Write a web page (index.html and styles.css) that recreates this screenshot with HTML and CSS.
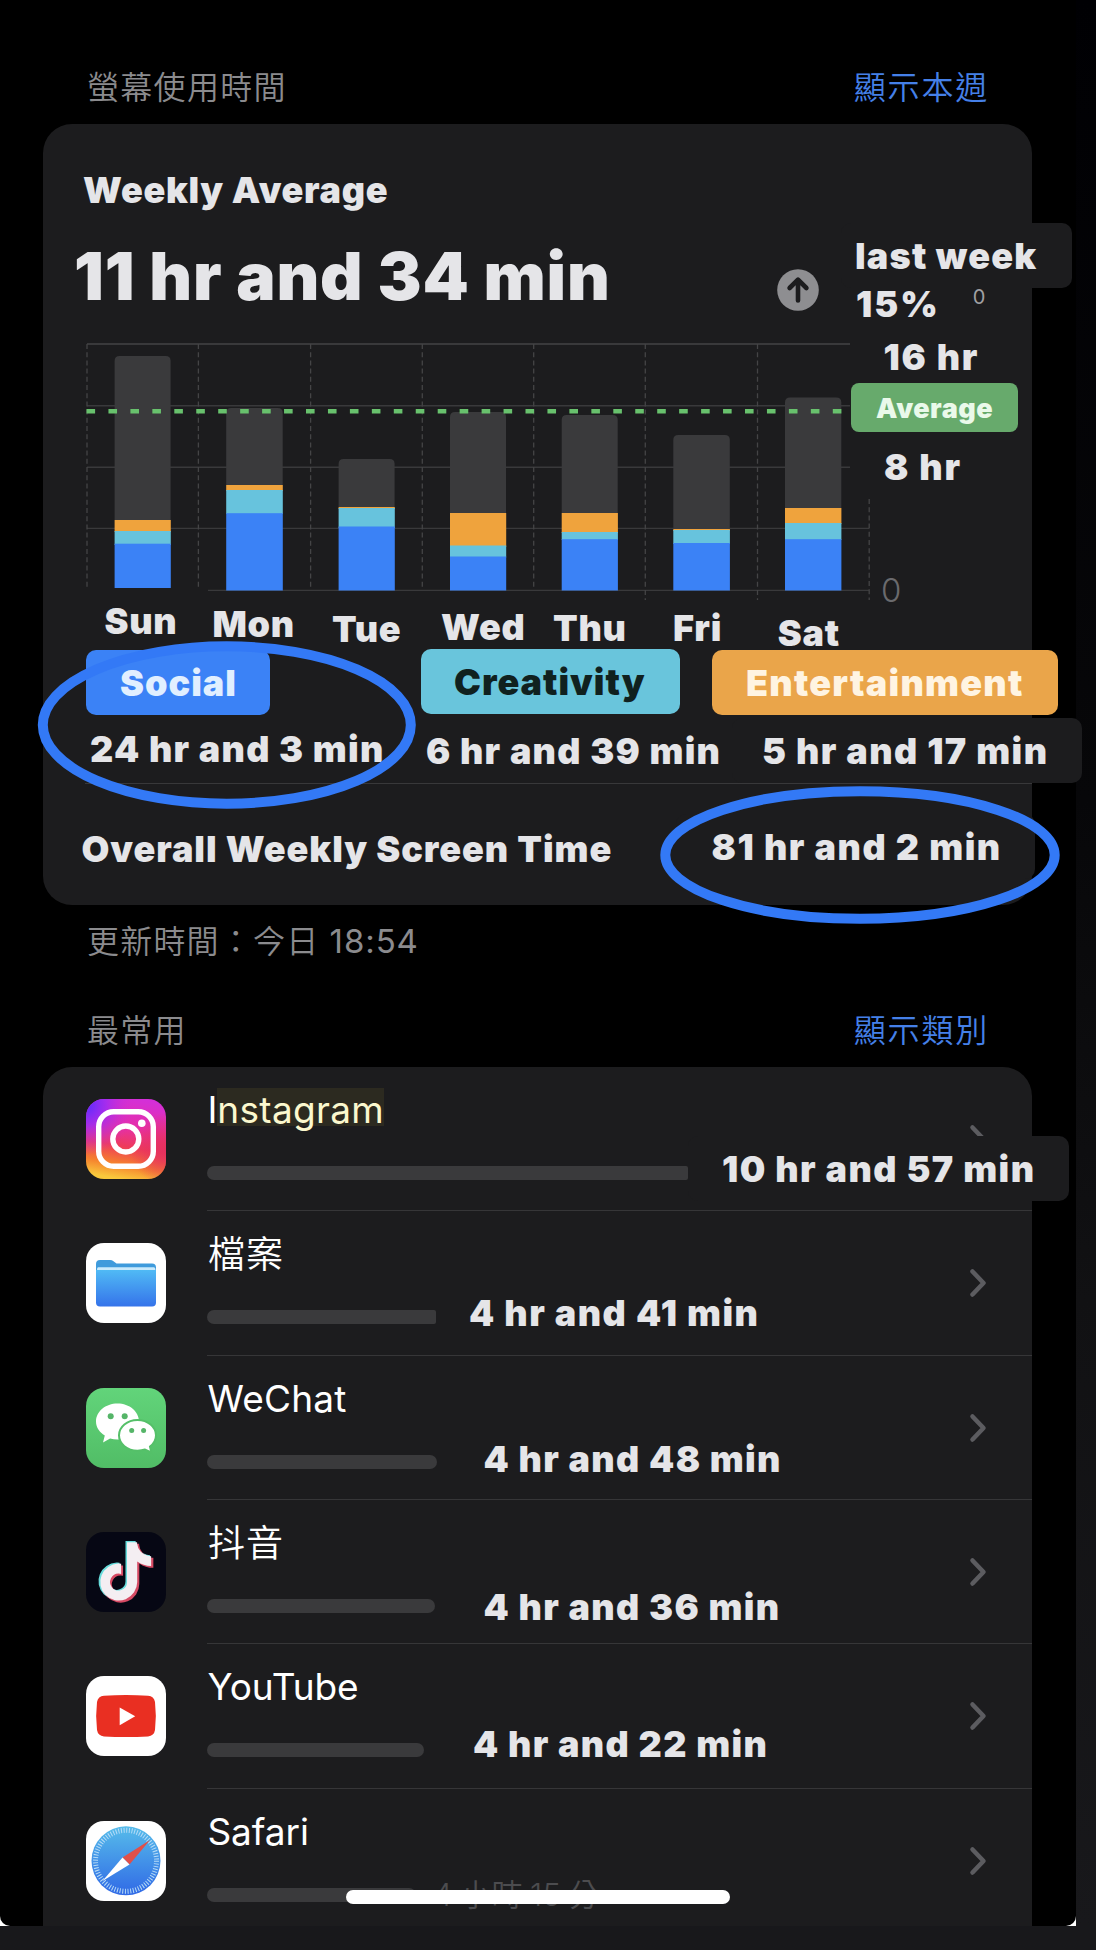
FILE: index.html
```html
<!DOCTYPE html>
<html lang="zh-Hant">
<head>
<meta charset="utf-8">
<title>螢幕使用時間</title>
<link rel="stylesheet" href="styles.css">
</head>
<body>
<div class="phone">
<main class="screen">
  <header class="section-head section-head-first">
    <span>螢幕使用時間</span>
    <a class="link">顯示本週</a>
  </header>

  <section class="card summary">
    <h2 class="label title">Weekly Average</h2>
    <div class="hero">
      <div class="hero-value">11 hr and 34 min</div>
      <svg class="trend" viewBox="0 0 42 42"><circle cx="21" cy="21" r="20.8" fill="#8e8e91"/><path d="M21 31.5V11M12.6 19 21 10.6 29.4 19" fill="none" stroke="#1c1c1e" stroke-width="4.6" stroke-linecap="round" stroke-linejoin="round"/></svg>
      <div class="compare label">
        <div class="compare-top">last week</div>
        <div class="compare-row"><span>15%</span><span class="tiny-zero">0</span></div>
      </div>
    </div>

    <svg class="chart" viewBox="43 340 989 310">
      <g stroke="#39393b" stroke-width="1.4">
        <path d="M87 344H850" stroke-width="2"/>
        <path d="M87 405.7H850M87 467.3H850M87 528.4H869M208 590.4H869"/>
      </g>
      <g stroke="#444446" stroke-width="1.3" stroke-dasharray="5 3.2" fill="none">
        <path d="M87 344V588M198.4 344V588M310.6 344V590M422.3 344V590M533.7 344V590M645.3 344V600M757.5 344V600M869.2 499V600"/>
      </g>
      <g fill="#3a3a3c">
        <path d="M114.6 520V361q0-5 5-5h46q5 0 5 5V520z"/>
        <path d="M226.2 485V413q0-5 5-5h46.500q5 0 5 5V485z"/>
        <path d="M338.600 507V464q0-5 5-5h46q5 0 5 5V507z"/>
        <path d="M450 513V417q0-5 5-5h46q5 0 5 5V513z"/>
        <path d="M561.700 513V420q0-5 5-5h46q5 0 5 5V513z"/>
        <path d="M673.300 529V440q0-5 5-5h46.500q5 0 5 5V529z"/>
        <path d="M785 508V402.500q0-5 5-5h46.300q5 0 5 5V508z"/>
      </g>
      <g fill="#efa33d">
        <rect x="114.6" y="520" width="56.2" height="12"/><rect x="226.2" y="485" width="56.600" height="6"/>
        <rect x="338.600" y="507" width="56.200" height="2"/><rect x="450" y="513" width="56.200" height="34"/>
        <rect x="561.700" y="513" width="56.200" height="20"/><rect x="673.300" y="529" width="56.600" height="2"/>
        <rect x="785" y="508" width="56.400" height="16"/>
      </g>
      <g fill="#67c3dd">
        <rect x="114.6" y="531" width="56.2" height="14"/><rect x="226.2" y="490" width="56.600" height="24"/>
        <rect x="338.600" y="508" width="56.200" height="20"/><rect x="450" y="545.500" width="56.200" height="12"/>
        <rect x="561.700" y="532" width="56.200" height="8"/><rect x="673.300" y="530" width="56.600" height="14"/>
        <rect x="785" y="523" width="56.400" height="17"/>
      </g>
      <g fill="#3b82f6">
        <rect x="114.6" y="543.700" width="56.2" height="44.300"/><rect x="226.2" y="513.200" width="56.600" height="77.300"/>
        <rect x="338.600" y="526.500" width="56.200" height="64"/><rect x="450" y="556.500" width="56.200" height="34"/>
        <rect x="561.700" y="539.200" width="56.200" height="51.300"/><rect x="673.300" y="543" width="56.600" height="47.500"/>
        <rect x="785" y="539.200" width="56.400" height="51.300"/>
      </g>
      <path d="M86.500 411.300H842" stroke="#68c16d" stroke-width="4.600" stroke-dasharray="8.600 13.350"/>
      <g class="axis label">
        <text x="104.500" y="634">Sun</text><text x="212.500" y="637">Mon</text><text x="332" y="642">Tue</text>
        <text x="441" y="640">Wed</text><text x="553" y="641">Thu</text><text x="673" y="641">Fri</text><text x="777.800" y="646">Sat</text>
        <text class="hours" x="883.500" y="370">16 hr</text><text class="hours" x="884" y="480">8 hr</text>
      </g>
      <text class="axis-zero" x="881" y="602">0</text>
      <rect x="851" y="383" width="167" height="49" rx="8" fill="#67aa6c"/>
      <text class="avg label" x="876" y="417.500">Average</text>
    </svg>

    <div class="legend">
      <div class="legend-item">
        <div class="chip chip-social label">Social</div>
        <div class="legend-time label">24 hr and 3 min</div>
      </div>
      <div class="legend-item legend-item-creativity">
        <div class="chip chip-creativity label">Creativity</div>
        <div class="legend-time label">6 hr and 39 min</div>
      </div>
      <div class="legend-item legend-item-entertainment">
        <div class="chip chip-entertainment label">Entertainment</div>
        <div class="legend-time label">5 hr and 17 min</div>
      </div>
    </div>
    <div class="total">
      <div class="label total-name">Overall Weekly Screen Time</div>
      <div class="label total-time">81 hr and 2 min</div>
    </div>
  </section>

  <p class="updated">更新時間：今日 <span class="clock">18:54</span></p>

  <header class="section-head">
    <span>最常用</span>
    <a class="link">顯示類別</a>
  </header>

  <section class="card apps">
    <article class="app app-instagram">
      <svg class="icon" viewBox="0 0 80 80">
        <defs>
          <linearGradient id="ig" x1=".62" y1="0" x2=".45" y2="1"><stop offset="0" stop-color="#d42fd8"/><stop offset=".35" stop-color="#e62fa8"/><stop offset=".6" stop-color="#ee3b5a"/><stop offset=".82" stop-color="#f5812e"/><stop offset="1" stop-color="#f9c83c"/></linearGradient>
          <radialGradient id="igv" cx="0" cy=".08" r=".62"><stop offset="0" stop-color="#5b2bff"/><stop offset=".4" stop-color="#9a2cf5" stop-opacity=".85"/><stop offset="1" stop-color="#d82fd0" stop-opacity="0"/></radialGradient>
          <radialGradient id="igr" cx="1" cy=".62" r=".45"><stop offset="0" stop-color="#e5305e"/><stop offset="1" stop-color="#e5305e" stop-opacity="0"/></radialGradient>
        </defs>
        <rect width="80" height="80" rx="18" fill="url(#ig)"/><rect width="80" height="80" rx="18" fill="url(#igr)"/><rect width="80" height="80" rx="18" fill="url(#igv)"/>
        <g fill="none" stroke="#fff" stroke-width="5.400"><rect x="12.700" y="12.700" width="54.600" height="54.600" rx="15"/><circle cx="39.800" cy="40" r="13"/></g>
        <circle cx="55.800" cy="24.200" r="3.800" fill="#fff"/>
      </svg>
      <div class="app-body">
        <div class="app-name"><span>I</span><span class="marked">nstagram</span></div>
        <div class="usage"><div class="bar bar-cut" style="width:481px"></div><div class="label app-time">10 hr and 57 min</div></div>
      </div>
      <svg class="chevron" viewBox="0 0 18 30"><path d="M3.500 3.500 14.500 15 3.500 26.500"/></svg>
    </article>

    <article class="app app-files">
      <svg class="icon" viewBox="0 0 80 80">
        <defs><linearGradient id="fl" x1="0" y1="0" x2="0" y2="1"><stop offset="0" stop-color="#50baf5"/><stop offset="1" stop-color="#3573ea"/></linearGradient></defs>
        <rect width="80" height="80" rx="18" fill="#fff"/>
        <path d="M10 21q0-4 4-4h10q2 0 3.500 1.200l3 2.300H66q4 0 4 4V32H10z" fill="#3f9bdc"/>
        <path d="M12 24.200H68q1.500 0 1.500 2.800H11q0-2.800 1-2.800z" fill="#c9eafc"/>
        <path d="M10 27H70V59.500q0 4-4 4H14q-4 0-4-4z" fill="url(#fl)"/>
      </svg>
      <div class="app-body">
        <div class="app-name cjk">檔案</div>
        <div class="usage"><div class="bar bar-cut" style="width:229px"></div><div class="label app-time">4 hr and 41 min</div></div>
      </div>
      <svg class="chevron" viewBox="0 0 18 30"><path d="M3.500 3.500 14.500 15 3.500 26.500"/></svg>
    </article>

    <article class="app app-wechat">
      <svg class="icon" viewBox="0 0 80 80">
        <defs><linearGradient id="wc" x1="0" y1="0" x2="0" y2="1"><stop offset="0" stop-color="#62d47a"/><stop offset="1" stop-color="#51bd66"/></linearGradient></defs>
        <rect width="80" height="80" rx="18" fill="url(#wc)"/>
        <path d="M31.500 15.500c12 0 21.500 8 21.500 18s-9.500 18-21.500 18c-2.600 0-5-.3-7.400-1L17 54.500l1.800-7C13.500 44.300 10 39.300 10 33.500c0-10 9.500-18 21.500-18z" fill="#fff"/>
        <path d="M51.500 32C61.800 32 70 38.800 70 47.300c0 4.600-2.300 8.500-6 11.300l1.300 5.700-6.300-2.800c-2.300.8-4.800 1.200-7.500 1.200C41.200 62.700 33 55.800 33 47.300S41.200 32 51.500 32z" fill="#fff" stroke="#55c069" stroke-width="2"/>
        <g fill="#55b568"><circle cx="24.700" cy="28.200" r="3"/><circle cx="38.700" cy="28.200" r="3"/><circle cx="45.700" cy="42.500" r="2.500"/><circle cx="57.600" cy="42.500" r="2.500"/></g>
      </svg>
      <div class="app-body">
        <div class="app-name latin-wide">WeChat</div>
        <div class="usage"><div class="bar" style="width:230.500px"></div><div class="label app-time">4 hr and 48 min</div></div>
      </div>
      <svg class="chevron" viewBox="0 0 18 30"><path d="M3.500 3.500 14.500 15 3.500 26.500"/></svg>
    </article>

    <article class="app app-douyin">
      <svg class="icon" viewBox="0 0 80 80">
        <defs><path id="note" d="M19.590 6.690a4.830 4.830 0 0 1-3.770-4.250V2h-3.450v13.670a2.890 2.890 0 0 1-5.200 1.740 2.890 2.890 0 0 1 2.310-4.640 2.930 2.930 0 0 1 .88.13V9.400a6.840 6.840 0 0 0-1-.05A6.330 6.330 0 0 0 5 20.100a6.340 6.340 0 0 0 10.860-4.430v-7a8.160 8.160 0 0 0 4.770 1.520v-3.400a4.850 4.850 0 0 1-1-.1z"/></defs>
        <rect width="80" height="80" rx="18" fill="#060714"/>
        <use href="#note" fill="#67dcdc" transform="translate(3 3) scale(2.950)"/>
        <use href="#note" fill="#d64a64" transform="translate(6.500 5.800) scale(2.950)"/>
        <use href="#note" fill="#f4eef2" transform="translate(4.900 4.300) scale(2.920)"/>
      </svg>
      <div class="app-body">
        <div class="app-name cjk">抖音</div>
        <div class="usage"><div class="bar" style="width:228.500px"></div><div class="label app-time">4 hr and 36 min</div></div>
      </div>
      <svg class="chevron" viewBox="0 0 18 30"><path d="M3.500 3.500 14.500 15 3.500 26.500"/></svg>
    </article>

    <article class="app app-youtube">
      <svg class="icon" viewBox="0 0 80 80">
        <rect width="80" height="80" rx="18" fill="#fff"/>
        <path d="M18 19.800q22-1.600 44 0 6 .4 7 6.200 1.700 14 0 28-1 6-7 6.400-22 1.400-44 0-6-.4-7-6.400-1.700-14 0-28 1-5.800 7-6.200z" fill="#e92f22"/>
        <path d="M33.700 31.500V49.200L49.200 40.300z" fill="#fff"/>
      </svg>
      <div class="app-body">
        <div class="app-name">YouTube</div>
        <div class="usage"><div class="bar" style="width:217px"></div><div class="label app-time">4 hr and 22 min</div></div>
      </div>
      <svg class="chevron" viewBox="0 0 18 30"><path d="M3.500 3.500 14.500 15 3.500 26.500"/></svg>
    </article>

    <article class="app app-safari">
      <svg class="icon" viewBox="0 0 80 80">
        <defs><linearGradient id="sf" x1="0" y1="0" x2="0" y2="1"><stop offset="0" stop-color="#56bcea"/><stop offset="1" stop-color="#3069e6"/></linearGradient></defs>
        <rect width="80" height="80" rx="18" fill="#fff"/>
        <circle cx="40" cy="39.800" r="34.500" fill="url(#sf)"/>
        <circle cx="40" cy="39.800" r="30.500" fill="none" stroke="#b7dcf7" stroke-width="5" stroke-dasharray="1 1.662"/>
        <path d="M64 19 43.500 43.500 36.500 36.500z" fill="#e0504a"/>
        <path d="M16.500 60 36.500 36.500 43.500 43.500z" fill="#fff"/>
      </svg>
      <div class="app-body">
        <div class="app-name">Safari</div>
        <div class="usage"><div class="bar" style="width:209px"></div><div class="ghost">4 小時 15 分</div></div>
      </div>
      <svg class="chevron" viewBox="0 0 18 30"><path d="M3.500 3.500 14.500 15 3.500 26.500"/></svg>
    </article>
  </section>

  <svg class="rings" viewBox="0 0 1096 1926"><g fill="none" stroke="#3379f6" stroke-width="10"><ellipse cx="226.800" cy="725" rx="184" ry="78.700"/><ellipse cx="860" cy="855" rx="194.700" ry="63.800"/></g></svg>
  <div class="home-bar"></div>
</main>
</div>
</body>
</html>
```
FILE: styles.css
```css
* { box-sizing: border-box; }

body {
  margin: 0;
  min-height: 1950px;
  background: linear-gradient(#000003 0, #070709 800px, #111113 1300px, #18181b 1926px);
  font-family: Inter, "Noto Sans CJK TC", sans-serif;
  color: #fff;
}

/* the white sheet behind shows only at the rounded bottom corners */
.phone { width: 1076px; height: 1926px; background: linear-gradient(#000 50%, #fff 50%); }
.screen { position: relative; height: 1926px; background: #000; border-radius: 0 0 10px 10px; }

.label { font-weight: 900; font-size: 36px; letter-spacing: .7px; color: #e5e5e8; white-space: nowrap; }

.section-head {
  display: flex;
  justify-content: space-between;
  align-items: center;
  height: 90px;
  padding: 18px 87px 0 87px;
  font-size: 32px;
  font-weight: 350;
  letter-spacing: 1.300px;
  line-height: 40px;
  color: #8b8b8e;
}
.section-head-first { height: 124px; padding-top: 52px; }
.link { color: #4580e8; letter-spacing: 1.800px; }

.card { margin: 0 44px 0 43px; background: #1c1c1e; border-radius: 29px; }

.summary { height: 781px; padding-top: 44px; }
.title { margin: 0 0 0 40px; line-height: 44px; }

.hero { display: flex; align-items: center; height: 128px; padding-left: 31px; }
.hero-value { flex: none; width: 703px; font-size: 66px; font-weight: 900; letter-spacing: .8px; color: #e5e5e8; white-space: nowrap; }
.trend { flex: none; width: 42px; height: 42px; margin-top: 28px; }
.compare { flex: none; align-self: flex-start; width: 231px; margin: 11px 0 0 22px; letter-spacing: 1.200px; }
.compare-top { height: 65px; padding-left: 14px; line-height: 67px; background: #1c1c1e; border-radius: 10px; }
.compare-row { display: flex; align-items: center; height: 48px; margin-top: -8px; padding-left: 15px; line-height: 48px; letter-spacing: 2px; }
.tiny-zero { margin: -15px 0 0 33px; font-size: 20px; font-weight: 400; color: #a0a0a3; }

.chart { display: block; width: 989px; height: 310px; overflow: visible; }
.axis text { fill: #e5e5e8; }
.hours { letter-spacing: 1.800px; }
.axis-zero { font-size: 33px; font-weight: 300; fill: #6a6a6d; }
.avg { font-size: 27px; letter-spacing: .5px; fill: #eaf9ea; }

.legend { display: grid; grid-template-columns: 335px 291px 370px; padding-left: 43px; height: 134px; border-bottom: 1px solid transparent; border-image: linear-gradient(90deg, transparent 43px, #38383a 43px) 1; }
.legend-item { display: flex; flex-direction: column; gap: 3px; }
.chip { height: 65px; padding-left: 34px; line-height: 67px; border-radius: 10px; letter-spacing: 1px; }
.chip-social { width: 184px; background: #3b82f6; color: #e1efff; }
.chip-creativity { width: 259px; margin-top: -1px; padding-left: 33px; background: #69c5dc; color: #10211f; }
.chip-entertainment { width: 346px; background: #eaa54a; color: #fff4e2; letter-spacing: 1.250px; }
.legend-time { height: 65px; line-height: 65px; padding-left: 4px; margin-top: -1px; letter-spacing: 1.250px; }
.legend-item-creativity .legend-time { padding-left: 5px; margin-top: 1px; line-height: 66px; }
.legend-item-entertainment .legend-time { margin: 0 0 0 20px; width: 350px; padding-left: 30px; line-height: 66px; background: #1c1c1e; border-radius: 10px; letter-spacing: 1.400px; }

.total { display: flex; align-items: flex-start; padding: 32px 0 0 38.500px; line-height: 67px; }
.total-name { flex: none; width: 594px; letter-spacing: .95px; }
.total-time { flex: none; width: 359px; height: 65px; margin-top: -2px; padding-left: 36px; background: #1c1c1e; border-radius: 10px; letter-spacing: 1.500px; }

.updated { height: 72px; margin: 0; padding-left: 87px; line-height: 72px; font-size: 32px; font-weight: 350; letter-spacing: 1.200px; color: #8b8b8e; }
.clock { font-size: 33px; font-weight: 400; letter-spacing: .9px; }

.apps { height: 859px; border-radius: 29px 29px 0 0; }
.app { display: flex; height: 144.330px; padding: 0 45px 0 43.300px; }
.app:last-child { height: 137px; }
.icon { flex: none; width: 80px; height: 80px; margin-top: 32px; }
.app-body { flex: none; width: 762px; margin-left: 40.700px; padding-top: 20px; }
.app:not(:last-child) .app-body { width: 825px; margin-right: -63px; border-bottom: 1px solid #363638; }
.app-name { height: 53.500px; padding-left: .5px; font-size: 37px; line-height: 45px; letter-spacing: -.1px; }
.latin-wide { letter-spacing: .2px; }
.marked { display: inline-block; height: 38px; margin-top: 1px; line-height: 43px; background: #2c2a20; color: #fbf8ce; letter-spacing: .3px; vertical-align: top; }
.cjk { padding-left: 1px; font-weight: 350; letter-spacing: 1px; line-height: 48px; }
.usage { display: flex; align-items: center; height: 65px; }
.bar { flex: none; height: 14px; background: #3a3a3c; border-radius: 7px; }
.bar-cut { border-radius: 7px 2px 2px 7px; }
.app-time { flex: none; position: relative; height: 65px; line-height: 67px; letter-spacing: 1.300px; }
.app-instagram .app-time { width: 381px; padding-left: 34px; margin-bottom: 9px; background: #1c1c1e; border-radius: 10px; letter-spacing: 1.400px; }
.app-files .app-time { margin: 0 0 9px 33px; letter-spacing: 1.450px; }
.app-wechat .app-time { margin: 0 0 6px 46px; }
.app-douyin .app-time { margin: 2px 0 0 48px; }
.app-youtube .app-time { margin: 0 0 13px 49px; }
.ghost { margin: -4px 0 0 17px; font-size: 31px; font-weight: 350; letter-spacing: .4px; word-spacing: -2px; color: #4c4c4f; white-space: nowrap; }
.chevron { flex: none; width: 18px; height: 30px; margin: 57px 0 0 auto; fill: none; stroke: #5c5c60; stroke-width: 4.500; stroke-linecap: round; stroke-linejoin: round; }

/* hand-drawn highlights over the summary figures */
.rings { position: absolute; left: 0; top: 0; width: 1096px; height: 1926px; pointer-events: none; }
.home-bar { position: absolute; left: 346px; bottom: 22px; width: 384px; height: 14px; border-radius: 7px; background: #fff; }
```
